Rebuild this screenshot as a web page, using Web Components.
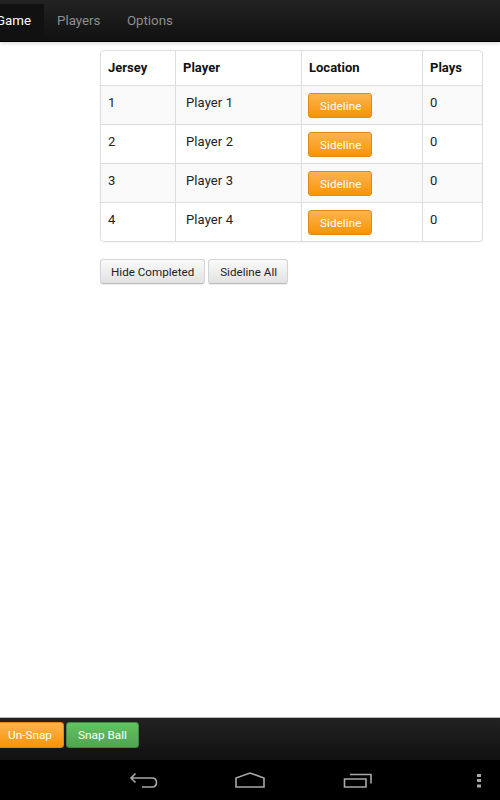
<!DOCTYPE html>
<html>
<head>
<meta charset="utf-8">
<style>
  html, body { margin: 0; height: 100%; }
  body {
    width: 500px;
    height: 800px;
    overflow: hidden;
    display: flex;
    flex-direction: column;
    font-family: Roboto, "Liberation Sans", sans-serif;
    background: #fff;
  }
</style>
</head>
<body>
<top-nav>
  <nav-tab active style="margin-left:-19px">Game</nav-tab>
  <nav-tab style="padding-right:13.500px">Players</nav-tab>
  <nav-tab>Options</nav-tab>
</top-nav>
<game-page>
  <player-table></player-table>
  <div slot="actions" style="display:flex">
    <ui-button>Hide Completed</ui-button>
    <ui-button style="padding:0 10px 0 11px">Sideline All</ui-button>
  </div>
</game-page>
<bottom-bar>
  <ui-button kind="orange" wide style="margin-left:-4px">Un-Snap</ui-button>
  <ui-button kind="green" wide>Snap Ball</ui-button>
</bottom-bar>
<system-bar></system-bar>

<script>
class TopNav extends HTMLElement {
  connectedCallback() {
    this.attachShadow({mode: 'open'}).innerHTML = `
      <style>
        :host {
          display: flex;
          flex: none;
          height: 42px;
          box-sizing: border-box;
          padding-top: 4px;
          background: linear-gradient(#222, #111);
          border-bottom: 1px solid #000;
          box-shadow: 0 1px 4px rgba(0,0,0,0.18);
        }
      </style>
      <slot></slot>`;
  }
}
customElements.define('top-nav', TopNav);

class NavTab extends HTMLElement {
  connectedCallback() {
    this.attachShadow({mode: 'open'}).innerHTML = `
      <style>
        :host {
          display: block;
          padding: 0 13px;
          height: 37px;
          line-height: 34px;
          font-size: 13.3px;
          color: #8f8f8f;
        }
        :host([active]) {
          background: #111;
          color: #fff;
          padding: 0 13px 0 15px;
        }
      </style>
      <slot></slot>`;
  }
}
customElements.define('nav-tab', NavTab);

class GamePage extends HTMLElement {
  connectedCallback() {
    this.attachShadow({mode: 'open'}).innerHTML = `
      <style>
        :host {
          display: flex;
          flex-direction: column;
          flex: 1;
          padding: 8px 17px 0 100px;
          gap: 17px;
        }
      </style>
      <slot></slot>
      <div style="display:flex"><slot name="actions"></slot></div>`;
  }
}
customElements.define('game-page', GamePage);

class PlayerTable extends HTMLElement {
  connectedCallback() {
    let rows = [1, 2, 3, 4].map(n => `
      <tr class="${n % 2 ? 'odd' : ''}">
        <td>${n}</td>
        <td class="name">Player ${n}</td>
        <td class="loc"><ui-button kind="orange">Sideline</ui-button></td>
        <td>0</td>
      </tr>`).join('');
    this.attachShadow({mode: 'open'}).innerHTML = `
      <style>
        :host { display: block; font-size: 13px; color: #222; }
        table {
          width: 383px;
          height: 192px;
          table-layout: fixed;
          border-collapse: separate;
          border-spacing: 0;
          border: 1px solid #ddd;
          border-radius: 4px;
          box-sizing: border-box;
          box-shadow: 0 1px 1px rgba(0,0,0,0.04);
        }
        th, td {
          box-sizing: border-box;
          padding: 0 7px;
          text-align: left;
          vertical-align: top;
          border-left: 1px solid #ddd;
          border-top: 1px solid #ddd;
        }
        th:first-child, td:first-child { border-left: 0; }
        th { border-top: 0; font-weight: 700; height: 34px; line-height: 34px; color: #111; }
        td { height: 39px; line-height: 34px; letter-spacing: 0.1px; }
        tr.odd td { background: #f9f9f9; }
        td.name { padding-left: 10px; }
        td.loc { padding: 7px 0 0 6px; line-height: 1; }
      </style>
      <table>
        <colgroup>
          <col style="width:74px"><col style="width:126px"><col style="width:121px"><col>
        </colgroup>
        <thead><tr><th>Jersey</th><th>Player</th><th>Location</th><th>Plays</th></tr></thead>
        <tbody>${rows}</tbody>
      </table>`;
  }
}
customElements.define('player-table', PlayerTable);

class UiButton extends HTMLElement {
  connectedCallback() {
    this.attachShadow({mode: 'open'}).innerHTML = `
      <style>
        :host {
          display: inline-block;
          box-sizing: border-box;
          height: 25px;
          line-height: 24px;
          padding: 0 10px;
          font-size: 11.6px;
          letter-spacing: 0.02px;
          color: #222;
          border: 1px solid #d4d4d4;
          border-bottom-color: #bbb;
          border-radius: 3px;
          background: linear-gradient(#fafafa, #e2e2e2);
          box-shadow: 0 1px 1px rgba(0,0,0,0.08);
          margin-right: 3px;
          white-space: nowrap;
          vertical-align: top;
        }
        :host([kind="orange"]) {
          font-size: 11.6px;
          letter-spacing: 0.1px;
          color: #fff;
          border-color: #e08a12;
          background: linear-gradient(#fbb450, #f89406);
          padding: 0 10px 0 11px;
          box-shadow: none;
          margin-right: 0;
        }
        :host([kind="green"]) {
          color: #fff;
          border-color: #3f8a3f;
          background: linear-gradient(#62c462, #51a351);
          box-shadow: none;
        }
        :host([wide]) { height: 26px; line-height: 25px; padding: 0 11px; margin-right: 2px; font-size: 11.8px; letter-spacing: 0; }
      </style>
      <slot></slot>`;
  }
}
customElements.define('ui-button', UiButton);

class BottomBar extends HTMLElement {
  connectedCallback() {
    this.attachShadow({mode: 'open'}).innerHTML = `
      <style>
        :host {
          display: flex;
          align-items: flex-start;
          flex: none;
          height: 43px;
          box-sizing: border-box;
          padding-top: 4px;
          border-top: 1px solid #bbb;
          background: linear-gradient(#222, #111);
        }
      </style>
      <slot></slot>`;
  }
}
customElements.define('bottom-bar', BottomBar);

class SystemBar extends HTMLElement {
  connectedCallback() {
    this.attachShadow({mode: 'open'}).innerHTML = `
      <style>
        :host { display: block; flex: none; height: 40px; background: #000; }
        svg { display: block; }
      </style>
      <svg width="500" height="40" viewBox="0 0 500 40" fill="none" stroke="#a8a8a8" stroke-width="1.6">
        <path d="M135.500 13.500 L131 18 L135.500 22.500 M131 18 H152 Q156.500 18 156.500 22.500 Q156.500 27 152 27 H142"/>
        <path d="M236 27 V18 L250 13 L264 18 V27 Z"/>
        <path d="M344.500 19 H366 V27 H344.500 Z"/>
        <path d="M350 14.500 H371 V23.500"/>
        <g fill="#a8a8a8" stroke="none">
          <rect x="477" y="14" width="4" height="3"/>
          <rect x="477" y="19" width="4" height="3"/>
          <rect x="477" y="24.500" width="4" height="3"/>
        </g>
      </svg>`;
  }
}
customElements.define('system-bar', SystemBar);
</script>
</body>
</html>
